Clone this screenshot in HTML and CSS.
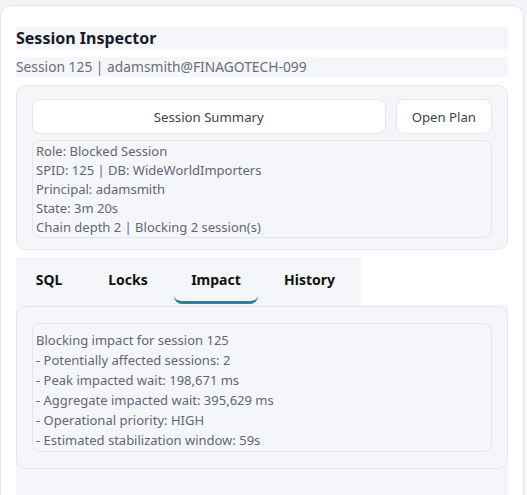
FILE: index.html
```html
<!DOCTYPE html>
<html>
<head>
<meta charset="utf-8">
<link rel="stylesheet" href="styles.css">
</head>
<body>
<div class="card">
  <div class="title">Session Inspector</div>
  <div class="subtitle">Session 125 | adamsmith@FINAGOTECH-099</div>
  <div class="panel">
    <div class="btn-row">
      <button class="btn btn-wide">Session Summary</button>
      <button class="btn">Open Plan</button>
    </div>
    <div class="box box-summary">Role: Blocked Session<br>SPID: 125 | DB: WideWorldImporters<br>Principal: adamsmith<br>State: 3m 20s<br>Chain depth 2 | Blocking 2 session(s)</div>
  </div>
  <div class="tabs">
    <div class="tab tab-sql">SQL</div>
    <div class="tab tab-locks">Locks</div>
    <div class="tab tab-impact active">Impact</div>
    <div class="tab tab-history">History</div>
  </div>
  <div class="tab-body">
    <div class="panel panel-impact">
      <div class="box box-impact">Blocking impact for session 125<br>- Potentially affected sessions: 2<br>- Peak impacted wait: 198,671 ms<br>- Aggregate impacted wait: 395,629 ms<br>- Operational priority: HIGH<br>- Estimated stabilization window: 59s</div>
    </div>
  </div>
</div>
</body>
</html>
```
FILE: styles.css
```css
html, body {
  margin: 0;
  padding: 0;
  background: #f3f4f8;
  font-family: "Noto Sans", "Open Sans", sans-serif;
}
body {
  padding-top: 5px;
  overflow: hidden;
  height: 490px;
}
.card {
  box-sizing: border-box;
  width: 524px;
  height: 490px;
  background: #ffffff;
  border: 1px solid #e4e6ec;
  border-bottom: none;
  border-radius: 12px 12px 0 0;
  padding: 20px 15px 0 15px;
  display: flex;
  flex-direction: column;
}
.title {
  background: #f5f6fa;
  height: 24px;
  line-height: 24px;
  font-size: 16px;
  font-weight: 700;
  color: #181b2a;
}
.subtitle {
  margin-top: 7px;
  background: #f5f6fa;
  height: 20px;
  line-height: 20px;
  font-size: 13.8px;
  color: #6a6e78;
}
.panel {
  margin-top: 8px;
  background: #f5f6fa;
  border: 1px solid #e4e6ec;
  border-radius: 10px;
  padding: 13px 15px 11px 15px;
}
.btn-row {
  display: flex;
  gap: 10px;
}
.btn {
  height: 35px;
  background: #ffffff;
  border: 1px solid #e4e6ec;
  border-radius: 8px;
  font-family: inherit;
  font-size: 13.2px;
  color: #3d4250;
  padding: 0 15px;
}
.btn-wide {
  flex: 1;
}
.box {
  border: 1px solid #e4e6ec;
  border-radius: 8px;
  font-size: 13px;
  color: #626673;
  padding: 0 3px;
}
.box-summary {
  margin-top: 6px;
  line-height: 19px;
  padding-top: 1px;
}
.tabs {
  margin-top: 7px;
  width: 345px;
  height: 48px;
  flex: none;
  background: #f5f6fa;
  display: flex;
  align-items: flex-start;
}
.tab {
  font-size: 14px;
  font-weight: 700;
  color: #111;
  height: 47px;
  box-sizing: border-box;
  padding-top: 1px;
  border-bottom: 3px solid transparent;
  border-radius: 8px;
  display: flex;
  align-items: center;
  justify-content: center;
}
.tab-sql { width: 66px; }
.tab-locks { width: 92px; }
.tab-impact { width: 84px; }
.tab-history { width: 103px; }
.tab.active {
  border-bottom-color: #1a8a96;
}
.tab-body {
  flex: 1;
  background: #f5f6fa;
  padding-top: 1px;
}
.panel-impact {
  margin-top: 0;
  padding: 16px 15px 16px 15px;
}
.box-impact {
  line-height: 20px;
  padding: 6px 3px 1px 3px;
}
```
